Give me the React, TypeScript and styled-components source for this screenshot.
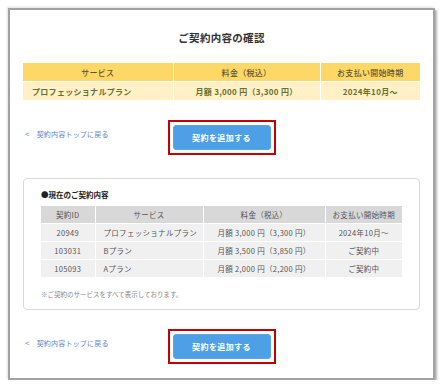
import React from 'react';
import styled, { createGlobalStyle } from 'styled-components';

const GlobalStyle = createGlobalStyle`
  html, body {
    margin: 0;
    padding: 0;
    background: #fff;
  }
  body {
    font-family: "Noto Sans CJK JP", "Noto Sans", sans-serif;
  }
`

const contracts = [
  { id: '20949', service: 'プロフェッショナルプラン', price: '月額 3,000 円（3,300 円）', start: '2024年10月～' },
  { id: '103031', service: 'Bプラン', price: '月額 3,500 円（3,850 円）', start: 'ご契約中' },
  { id: '105093', service: 'Aプラン', price: '月額 2,000 円（2,200 円）', start: 'ご契約中' },
]

const ActionRow: React.FC = () => (
  <StyledActionRow>
    <BackLink href="#">
      <span>&lt;</span>
      契約内容トップに戻る
    </BackLink>
    <Highlight>
      <AddButton type="button">契約を追加する</AddButton>
    </Highlight>
    <span />
  </StyledActionRow>
)

const App: React.FC = () => {
  return (
    <>
      <GlobalStyle />
      <Frame>
        <Title>ご契約内容の確認</Title>

        <ConfirmTable>
          <colgroup>
            <col style={{ width: 150 }} />
            <col style={{ width: 147 }} />
            <col />
          </colgroup>
          <thead>
            <tr>
              <ConfirmHead>サービス</ConfirmHead>
              <ConfirmHead>料金（税込）</ConfirmHead>
              <ConfirmHead>お支払い開始時期</ConfirmHead>
            </tr>
          </thead>
          <tbody>
            <tr>
              <ConfirmCell $left>プロフェッショナルプラン</ConfirmCell>
              <ConfirmCell>月額 3,000 円（3,300 円）</ConfirmCell>
              <ConfirmCell>2024年10月～</ConfirmCell>
            </tr>
          </tbody>
        </ConfirmTable>

        <ActionRow />

        <CurrentBox>
          <BoxTitle>●現在のご契約内容</BoxTitle>
          <CurrentTable>
            <colgroup>
              <col style={{ width: 54 }} />
              <col style={{ width: 108 }} />
              <col style={{ width: 122 }} />
              <col />
            </colgroup>
            <thead>
              <tr>
                <CurrentHead>契約ID</CurrentHead>
                <CurrentHead>サービス</CurrentHead>
                <CurrentHead>料金（税込）</CurrentHead>
                <CurrentHead>お支払い開始時期</CurrentHead>
              </tr>
            </thead>
            <tbody>
              {contracts.map(c => (
                <tr key={c.id}>
                  <CurrentCell>{c.id}</CurrentCell>
                  <CurrentCell $left>{c.service}</CurrentCell>
                  <CurrentCell>{c.price}</CurrentCell>
                  <CurrentCell>{c.start}</CurrentCell>
                </tr>
              ))}
            </tbody>
          </CurrentTable>
          <Note>※ご契約のサービスをすべて表示しております。</Note>
        </CurrentBox>

        <ActionRow />
      </Frame>
    </>
  )
}

const Frame = styled.div`
  box-sizing: border-box;
  width: 427px;
  margin: 8px 0 0 8px;
  padding: 20px 13px 14px;
  border: 2px solid #a3a3a3;
  box-shadow: 2px 2px 2px rgba(0, 0, 0, 0.3), -1px -1px 2px rgba(0, 0, 0, 0.12);
  background: #fff;
  display: flex;
  flex-direction: column;
`

const Title = styled.h1`
  margin: 0 0 17px;
  font-size: 10.5px;
  line-height: 16px;
  font-weight: 700;
  color: #333;
  text-align: center;
  letter-spacing: 0.3px;
`

const ConfirmTable = styled.table`
  width: 100%;
  margin-bottom: 20px;
  border-collapse: collapse;
  table-layout: fixed;
  font-size: 8px;
  letter-spacing: 0.3px;
`

const ConfirmHead = styled.th`
  height: 18px;
  padding: 0;
  background: #fdd866;
  color: #5f5637;
  font-weight: 500;
  border-left: 1px solid #fff;
  &:first-child { border-left: none; }
`

const ConfirmCell = styled.td<{ $left?: boolean }>`
  height: 18px;
  padding: 0 0 0 ${props => (props.$left ? '9px' : '0')};
  background: #fff0c6;
  color: #687031;
  font-weight: 700;
  text-align: ${props => (props.$left ? 'left' : 'center')};
  border-left: 1px solid #fff;
  border-top: 1px solid #fff;
  &:first-child { border-left: none; }
`

const StyledActionRow = styled.div`
  display: grid;
  grid-template-columns: 1fr auto 1fr;
  align-items: start;
`

const BackLink = styled.a`
  margin-top: 9px;
  display: flex;
  gap: 7px;
  font-size: 7px;
  line-height: 10px;
  color: #5f86c9;
  text-decoration: none;
  letter-spacing: 0.2px;

  span {
    font-size: 8px;
    padding-left: 2px;
  }
`

const Highlight = styled.div`
  border: 2px solid #c40000;
  padding: 3px;
`

const AddButton = styled.button`
  display: block;
  width: 98px;
  height: 25px;
  border: 1px solid #5aa6ea;
  border-radius: 3px;
  background: #4d9fe6;
  color: #fff;
  font-family: inherit;
  font-size: 8px;
  font-weight: 700;
  letter-spacing: 0.4px;
  cursor: pointer;
`

const CurrentBox = styled.div`
  margin: 23px 0 19px;
  border: 1px solid #d9d9d9;
  border-radius: 4px;
  padding: 11px 17px 10px;
`

const BoxTitle = styled.div`
  font-size: 7.5px;
  line-height: 10px;
  font-weight: 700;
  color: #222;
  margin-bottom: 6px;
`

const CurrentTable = styled.table`
  width: 100%;
  border-collapse: collapse;
  table-layout: fixed;
  font-size: 7.5px;
  color: #555;
  letter-spacing: 0.3px;
`

const CurrentHead = styled.th`
  height: 17px;
  padding: 0;
  background: #d8d8d8;
  font-weight: 400;
  border-left: 1px solid #fff;
  &:first-child { border-left: none; }
`

const CurrentCell = styled.td<{ $left?: boolean }>`
  height: 17px;
  padding: 0 0 0 ${props => (props.$left ? '8px' : '0')};
  background: #f0f0f0;
  text-align: ${props => (props.$left ? 'left' : 'center')};
  border-left: 1px solid #fff;
  border-top: 1px solid #fff;
  &:first-child { border-left: none; }
`

const Note = styled.p`
  margin: 12px 0 0;
  font-size: 6.5px;
  line-height: 10px;
  color: #888;
`

export default App
